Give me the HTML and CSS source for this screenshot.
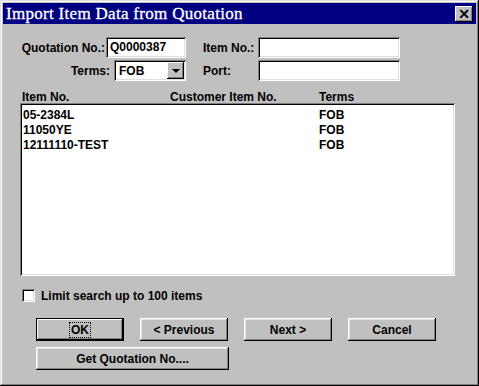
FILE: index.html
```html
<!DOCTYPE html>
<html lang="en">

<head>
    <meta charset="UTF-8">
    <title>Import Item Data from Quotation</title>
    <link rel="stylesheet" href="styles.css">
</head>

<body>
    <div class="window">
        <div class="titlebar">
            <span class="title">Import Item Data from Quotation</span>
            <span class="close_btn">&#x2715;</span>
        </div>
        <div class="content">
            <div class="form_row">
                <label class="lbl lbl_quote">Quotation No.:</label>
                <span class="field field_quote">Q0000387</span>
                <label class="lbl lbl_right">Item No.:</label>
                <span class="field field_wide"></span>
            </div>
            <div class="form_row">
                <label class="lbl lbl_terms">Terms:</label>
                <span class="field combo">
                    <span class="combo_text">FOB</span>
                    <span class="combo_btn"><span class="arrow"></span></span>
                </span>
                <label class="lbl lbl_right">Port:</label>
                <span class="field field_wide"></span>
            </div>

            <div class="list_head">
                <span class="col col_item">Item No.</span>
                <span class="col col_cust">Customer Item No.</span>
                <span class="col">Terms</span>
            </div>
            <div class="listbox">
                <div class="list_row">
                    <span class="col col_item">05-2384L</span>
                    <span class="col">FOB</span>
                </div>
                <div class="list_row">
                    <span class="col col_item">11050YE</span>
                    <span class="col">FOB</span>
                </div>
                <div class="list_row">
                    <span class="col col_item">12111110-TEST</span>
                    <span class="col">FOB</span>
                </div>
            </div>

            <div class="check_row">
                <span class="checkbox"></span>
                <span>Limit search up to 100 items</span>
            </div>

            <div class="btn_row btn_row_main">
                <span class="btn btn_default"><span class="focus">OK</span></span>
                <span class="btn">&lt; Previous</span>
                <span class="btn">Next &gt;</span>
                <span class="btn">Cancel</span>
            </div>
            <div class="btn_row">
                <span class="btn btn_long">Get Quotation No....</span>
            </div>
        </div>
    </div>
</body>

</html>
```

FILE: styles.css
```css
* {
    margin: 0;
    padding: 0;
    box-sizing: border-box;
}

body {
    background: #c0c0c0;
    font: bold 12px "Liberation Sans", Arial, sans-serif;
    color: #000;
}

/* 窗口外框 */

.window {
    width: 479px;
    height: 386px;
    padding: 3px;
    background: #c0c0c0;
    box-shadow: inset -1px -1px #000, inset 1px 1px #dfdfdf,
        inset -2px -2px #808080, inset 2px 2px #fff;
}

.titlebar {
    height: 21px;
    background: #000080;
    color: #fff;
    display: flex;
    align-items: center;
    justify-content: space-between;
    padding: 0 3px 0 3px;
}

.title {
    font: 17px "Liberation Serif", "Times New Roman", serif;
    letter-spacing: 0.3px;
    -webkit-text-stroke: 0.3px #fff;
}

.close_btn {
    width: 18px;
    height: 16px;
    background: #c0c0c0;
    color: #000;
    font: bold 14px "DejaVu Sans", sans-serif;
    -webkit-text-stroke: 0.6px #000;
    display: flex;
    align-items: center;
    justify-content: center;
    box-shadow: inset -1px -1px #000, inset 1px 1px #fff,
        inset -2px -2px #808080;
}

.content {
    padding: 13px 0 0 17px;
}

/* 表单 */

.form_row {
    display: flex;
    align-items: center;
    height: 21px;
    margin-bottom: 2px;
}

.lbl {
    text-align: right;
}

.lbl_quote {
    width: 86px;
    padding-right: 1px;
}

.lbl_terms {
    width: 94px;
    padding-right: 4px;
}

.lbl_right {
    width: 56px;
    margin-left: 17px;
    text-align: left;
}

.field {
    height: 21px;
    background: #fff;
    box-shadow: inset 1px 1px #808080, inset -1px -1px #fff,
        inset 2px 2px #000, inset -2px -2px #dfdfdf;
    padding: 3px 0 0 4px;
}

.field_quote {
    width: 80px;
}

.field_wide {
    width: 142px;
    margin-left: -1px;
}

.combo {
    width: 72px;
    display: flex;
    justify-content: space-between;
    padding: 2px 2px 2px 5px;
}

.combo_text {
    padding-top: 2px;
}

.combo_btn {
    width: 17px;
    height: 17px;
    background: #c0c0c0;
    box-shadow: inset -1px -1px #000, inset 1px 1px #fff,
        inset -2px -2px #808080;
    display: flex;
    align-items: center;
    justify-content: center;
}

.arrow {
    width: 0;
    height: 0;
    border-left: 4px solid transparent;
    border-right: 4px solid transparent;
    border-top: 4px solid #000;
}

/* 列表 */

.list_head {
    display: flex;
    margin-top: 10px;
    padding-left: 2px;
    height: 12px;
    line-height: 12px;
}

.col_item {
    width: 148px;
}

.col_cust {
    width: 149px;
}

.listbox {
    width: 435px;
    height: 173px;
    background: #fff;
    padding: 5px 0 0 3px;
    box-shadow: inset 1px 1px #808080, inset -1px -1px #fff,
        inset 2px 2px #000, inset -2px -2px #dfdfdf;
}

.list_row {
    display: flex;
    height: 15px;
    line-height: 15px;
}

.list_row .col_item {
    width: 296px;
}

/* 复选框 */

.check_row {
    display: flex;
    align-items: center;
    gap: 6px;
    margin: 13px 0 0 2px;
    height: 13px;
}

.checkbox {
    width: 13px;
    height: 13px;
    background: #fff;
    box-shadow: inset 1px 1px #808080, inset -1px -1px #fff,
        inset 2px 2px #000, inset -2px -2px #dfdfdf;
}

/* 按钮 */

.btn_row {
    display: flex;
    gap: 16px;
    margin-left: 16px;
    margin-top: 6px;
}

.btn_row_main {
    margin-top: 16px;
}

.btn {
    width: 88px;
    height: 23px;
    background: #c0c0c0;
    display: flex;
    align-items: center;
    justify-content: center;
    box-shadow: inset -1px -1px #000, inset 1px 1px #fff,
        inset -2px -2px #808080, inset 2px 2px #dfdfdf;
}

.btn_default {
    box-shadow: inset 0 0 0 1px #000, inset -2px -2px #000,
        inset 2px 2px #fff, inset -3px -3px #808080;
}

.focus {
    outline: 1px dotted #000;
    padding: 0 1px;
}

.btn_long {
    width: 193px;
}
```
